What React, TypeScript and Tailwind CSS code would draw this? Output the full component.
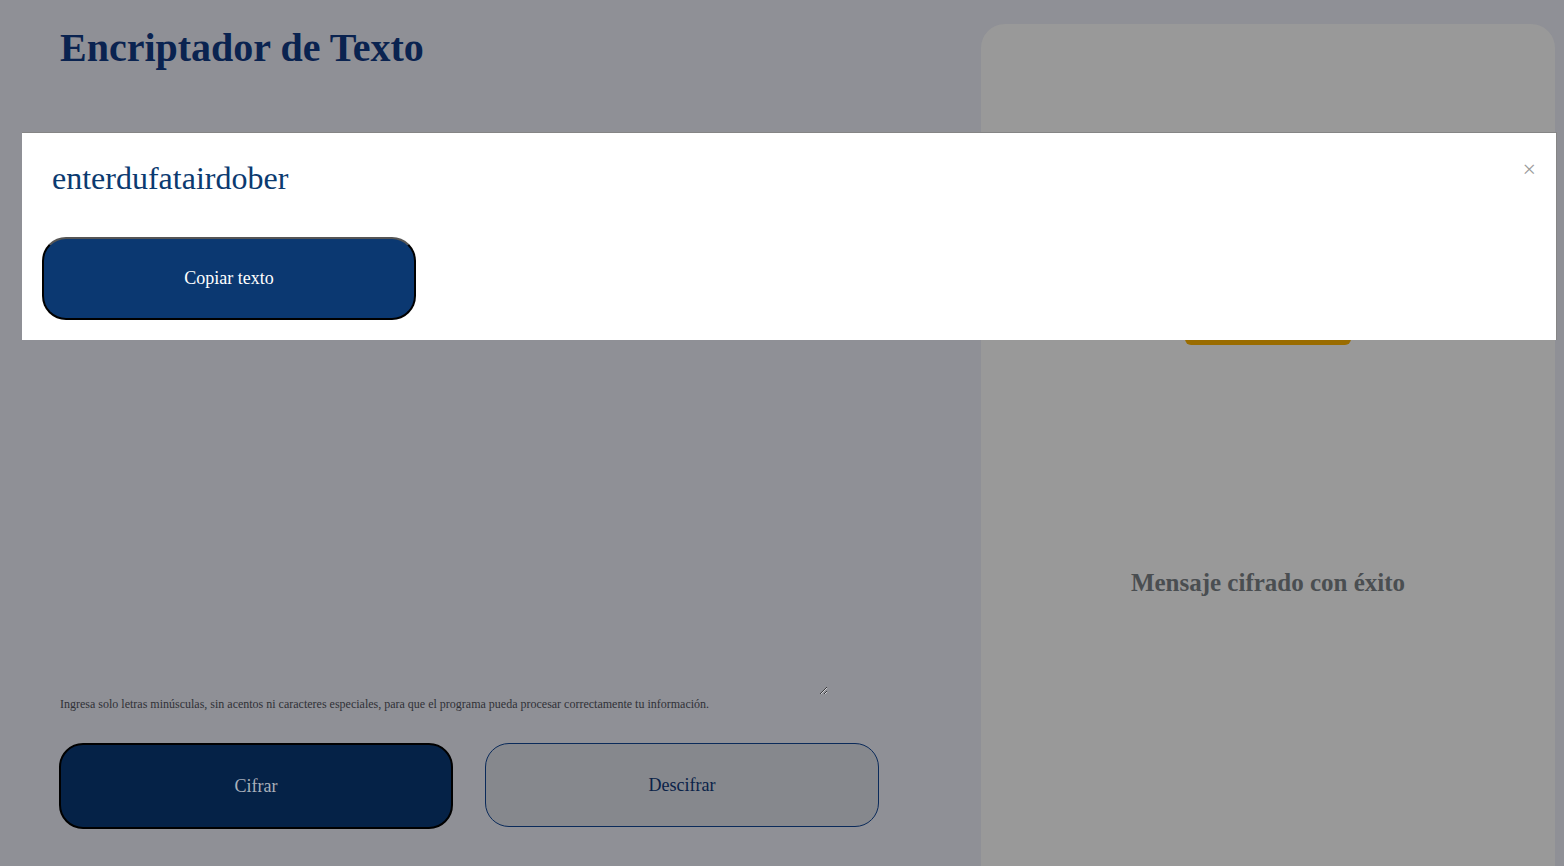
import { useState } from "react";

const serif = "font-['Liberation_Serif','Times_New_Roman',serif]";

export default function App() {
  const [text, setText] = useState("");
  const [open, setOpen] = useState(true);

  return (
    <div className={`relative flex h-[866px] w-full overflow-hidden bg-[#8f9096] ${serif}`}>
      <main className="flex w-[981px] flex-col px-[60px]">
        <h1 className="mt-[26px] text-[40px] font-bold leading-[44px] text-[#0a2350]">
          Encriptador de Texto
        </h1>
        <textarea
          className="mt-[30px] h-[595px] w-[768px] resize border-0 bg-transparent text-[32px] text-[#0a2350] outline-none"
          onChange={(e) => setText(e.target.value)}
          value={text}
        />
        <p className="mt-[2px] text-[12px] leading-[14px] text-[#2f3136]">
          Ingresa solo letras minúsculas, sin acentos ni caracteres especiales, para que el programa pueda procesar correctamente tu información.
        </p>
        <div className="-ml-px mt-[32px] flex gap-[32px]">
          <button
            className="h-[86px] w-[394px] rounded-[24px] border-2 border-black bg-[#052247] text-[18px] text-[#a9b0ba]"
            type="button"
          >
            Cifrar
          </button>
          <button
            className="h-[84px] w-[394px] rounded-[24px] border border-[#0a2a5a] bg-[#86888d] text-[18px] text-[#0a2248]"
            type="button"
          >
            Descifrar
          </button>
        </div>
      </main>

      <aside className="mt-[24px] flex w-[574px] flex-col items-center rounded-t-[24px] bg-[#999999]">
        <div className="mt-[293px] h-[28px] w-[166px] rounded-b-[6px] bg-[#9a6c00]" />
        <h2 className="mt-[219px] text-[25px] font-bold text-[#4a4e51]">Mensaje cifrado con éxito</h2>
      </aside>

      {open ? (
        <div className="absolute left-[22px] top-[132px] h-[208px] w-[1535px] border-t border-r border-[#858585] bg-white">
          <button
            className="absolute right-[20px] top-[24px] text-[24px] leading-none text-[#9a9a9a]"
            onClick={() => setOpen(false)}
            type="button"
          >
            ×
          </button>
          <p className="ml-[30px] mt-[25px] text-[32px] leading-[40px] text-[#0b3a70]">enterdufatairdober</p>
          <button
            className="ml-[20px] mt-[39px] h-[83px] w-[374px] rounded-[24px] border-2 border-black border-t-[#555] bg-[#0b3871] text-[18px] text-white"
            type="button"
          >
            Copiar texto
          </button>
        </div>
      ) : null}
    </div>
  );
}
